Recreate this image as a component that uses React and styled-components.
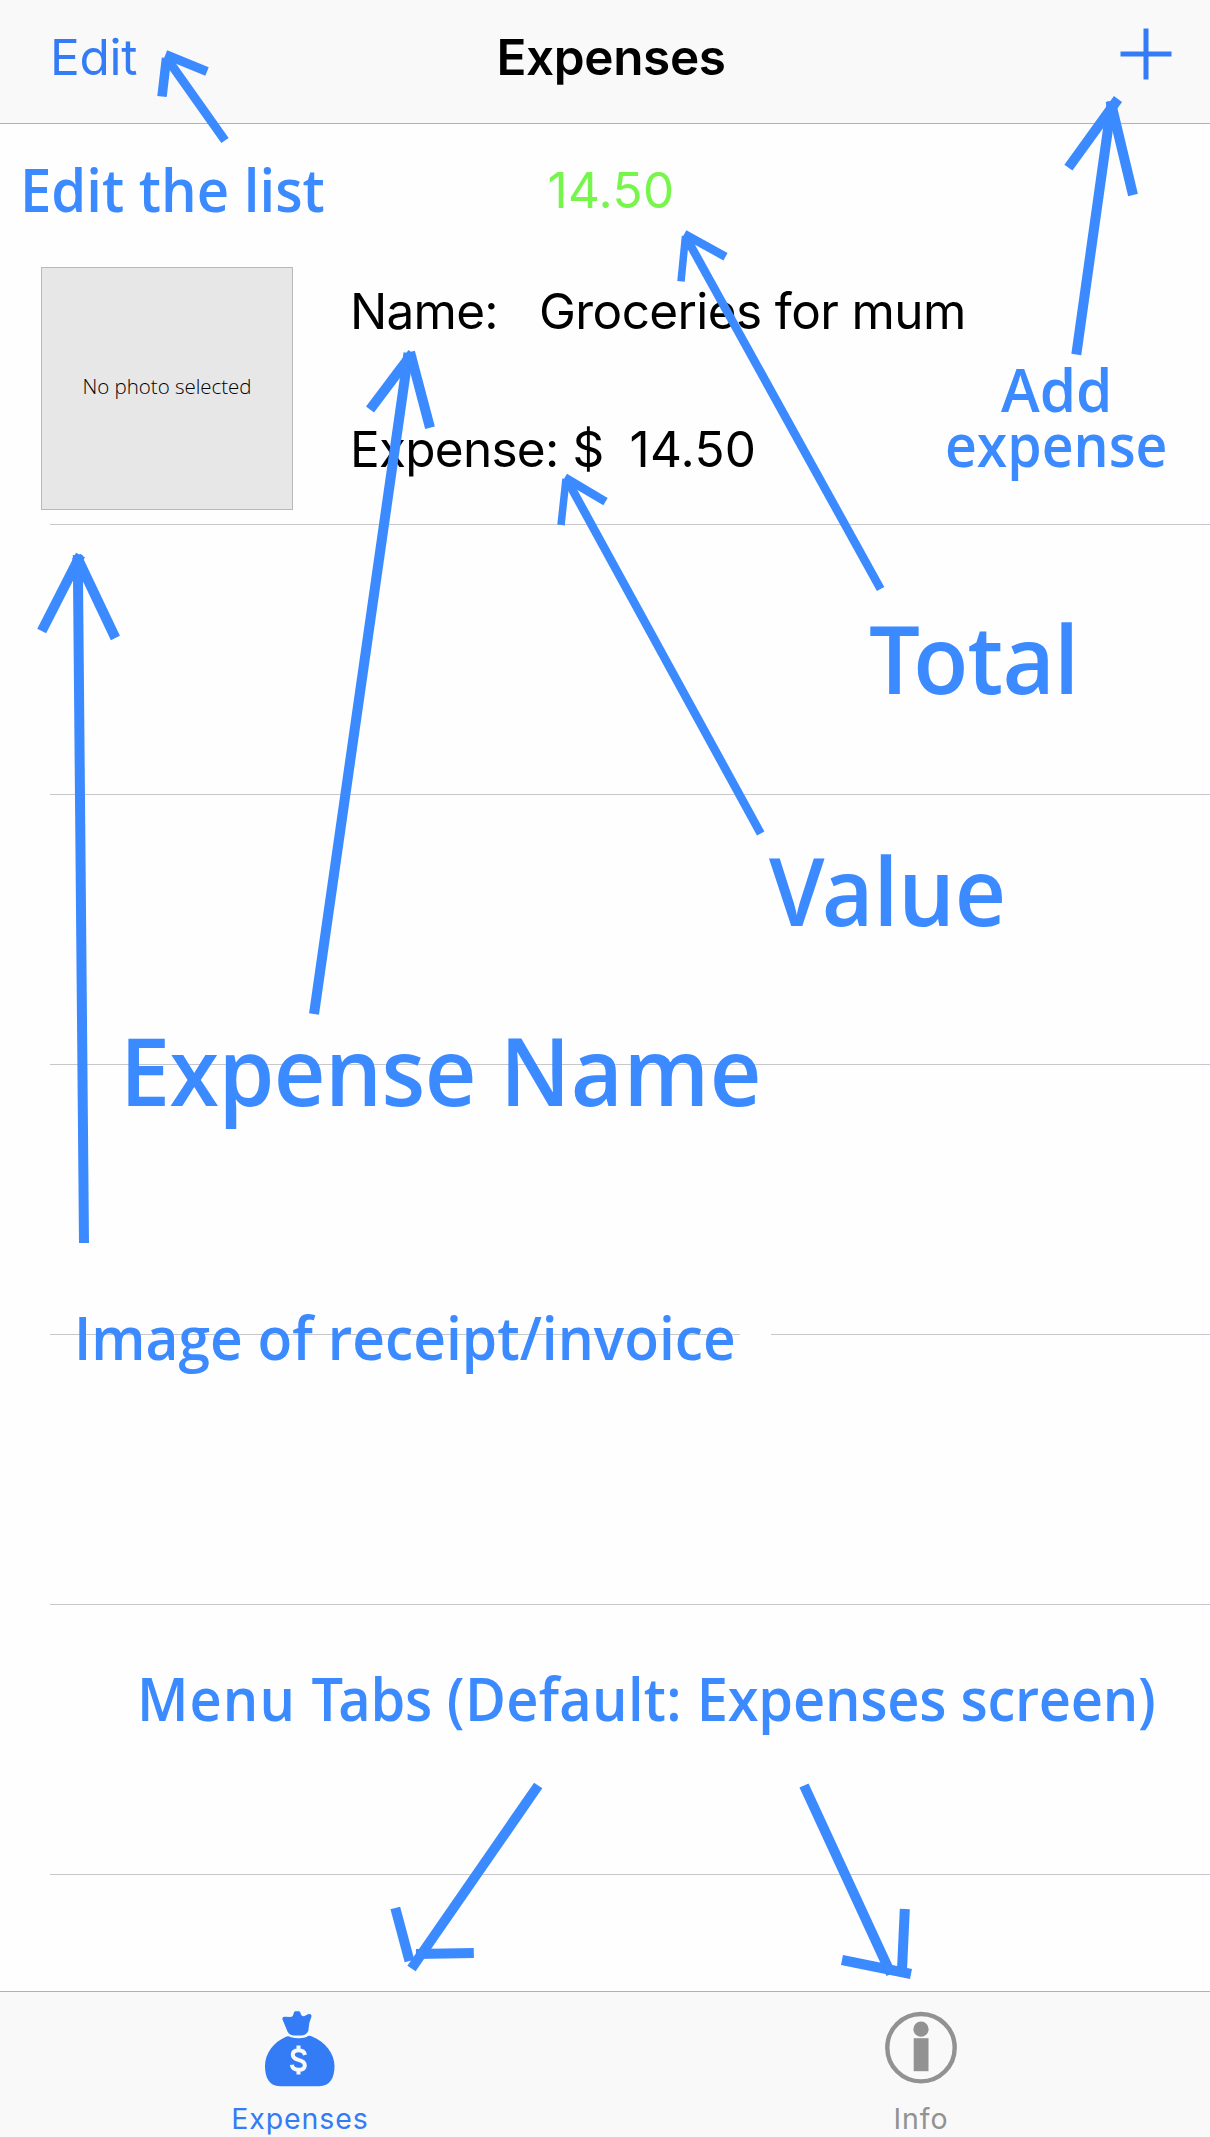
import React from "react";
import styled, { createGlobalStyle } from "styled-components";

const GlobalStyle = createGlobalStyle`
  body {
    margin: 0;
    background: #fff;
  }
`;

const BLUE = "#347cf6";
const NOTE = "#3b8aff";

const Screen = styled.div`
  position: relative;
  display: flex;
  flex-direction: column;
  width: 1210px;
  height: 2137px;
  overflow: hidden;
  background: #fefefe;
  color: #000;
  font-family: Inter, "Liberation Sans", sans-serif;
  font-size: 49.5px;
  line-height: 60px;
`;

const NavBar = styled.header`
  display: grid;
  grid-template-columns: 1fr auto 1fr;
  align-items: center;
  box-sizing: border-box;
  height: 124px;
  padding: 0 38px 9px 50px;
  background: #f9f9f9;
  border-bottom: 1px solid #b2b2b2;
`;

const EditButton = styled.button`
  justify-self: start;
  padding: 0;
  border: 0;
  background: none;
  color: ${BLUE};
  font: inherit;
  letter-spacing: -0.3px;
`;

const Title = styled.h1`
  margin: 0;
  font-size: inherit;
  font-weight: 600;
  letter-spacing: -0.38px;
`;

const AddButton = styled.button`
  justify-self: end;
  display: flex;
  margin-bottom: 7px;
  padding: 0;
  border: 0;
  background: none;
`;

const List = styled.main`
  flex: 1;
  min-height: 0;
  overflow: hidden;
`;

const Total = styled.div`
  display: flex;
  align-items: center;
  justify-content: center;
  height: 132px;
  padding-left: 12px;
  box-sizing: border-box;
  color: #76f54b;
  letter-spacing: 0.38px;
`;

const ExpenseRow = styled.article`
  display: flex;
  gap: 57px;
  height: 268px;
  padding: 11px 0 0 41px;
  box-sizing: border-box;
`;

const Photo = styled.div`
  display: flex;
  align-items: center;
  justify-content: center;
  box-sizing: border-box;
  width: 252px;
  height: 243px;
  padding-bottom: 5px;
  background: #e7e7e7;
  border: 1px solid #b9b9b9;
  font: 300 20.5px/28px "Open Sans", "Noto Sans", sans-serif;
  letter-spacing: -0.03px;
`;

const Details = styled.dl`
  display: flex;
  flex-direction: column;
  gap: 50px;
  margin: 0;
`;

const Field = styled.div`
  display: flex;
  align-items: center;
  height: 88px;
`;

const Label = styled.dt`
  width: ${(p) => p.$width}px;
  letter-spacing: -0.75px;
`;

const Currency = styled.dd`
  width: 57px;
  margin: 0;
`;

const Value = styled.dd`
  margin: 0;
  white-space: nowrap;
  letter-spacing: ${(p) => p.$spacing}px;
`;

const Separator = styled.div`
  height: 1px;
  margin-left: 50px;
  background: #c8c8ca;
`;

const EmptyRow = styled.div`
  height: 269px;
`;

const TabBar = styled.nav`
  display: flex;
  justify-content: center;
  gap: 221px;
  box-sizing: border-box;
  height: 146px;
  padding: 19px 0 0 11px;
  background: #f9f9f9;
  border-top: 1px solid #b2b2b2;
`;

const Tab = styled.a`
  display: flex;
  flex-direction: column;
  align-items: center;
  gap: 14px;
  width: 400px;
  color: ${(p) => (p.$active ? BLUE : "#929292")};
  font-size: 28.5px;
  line-height: 35px;
  letter-spacing: 0.88px;
`;

const Annotations = styled.div`
  position: absolute;
  inset: 0;
  pointer-events: none;
`;

const Arrows = styled.svg`
  position: absolute;
  inset: 0;
`;

const Eraser = styled.div`
  position: absolute;
  left: 740px;
  top: 1330px;
  width: 31px;
  height: 8px;
  background: #fefefe;
`;

const Note = styled.span`
  position: absolute;
  left: ${(p) => p.$x}px;
  top: ${(p) => p.$baseline + 1 - p.$size * 0.888}px;
  color: ${NOTE};
  font: 600 ${(p) => p.$size}px/1 "Open Sans", "Noto Sans", sans-serif;
  white-space: pre;
  transform: scaleX(${(p) => p.$stretch});
  transform-origin: 0 50%;
`;

const Tracked = styled.span`
  letter-spacing: ${(p) => p.$tracking}px;
`;

// Each note is a list of runs: [text, letter spacing]
const notes = [
  { runs: [["Edit the list", 0]], x: 19.5, baseline: 211, size: 58.8, stretch: 0.956 },
  { runs: [["Add", 0]], x: 1001, baseline: 411, size: 58.8, stretch: 0.995 },
  { runs: [["expense", 0]], x: 944.5, baseline: 466, size: 58.8, stretch: 0.94 },
  { runs: [["T", -7], ["otal", -0.8]], x: 869, baseline: 693, size: 94, stretch: 0.96 },
  { runs: [["V", -3], ["alue", 0]], x: 769, baseline: 925, size: 94, stretch: 0.948 },
  { runs: [["Expense", -0.6], [" Name", 0.6]], x: 119.5, baseline: 1105, size: 94, stretch: 0.956 },
  { runs: [["Image of receipt/invoice", 0]], x: 73.5, baseline: 1359, size: 58.8, stretch: 0.967 },
  {
    runs: [["Menu ", 1.1], ["T", -5], ["abs", -0.3], [" (Default: ", 0.35], ["Expenses screen)", -0.25]],
    x: 137,
    baseline: 1720,
    size: 58.8,
    stretch: 0.951,
  },
];

// Each arrow is a shaft and two barbs: [x1, y1, x2, y2, stroke width]
const strokes = [
  // edit
  [168, 60, 225, 140.5, 9],
  [165.5, 54.5, 207, 71.5, 9],
  [166.5, 58, 162, 96.5, 9.5],
  // add
  [1111.8, 102, 1076.3, 354.5, 10],
  [1118, 99, 1068.4, 167.6, 10],
  [1110.5, 101, 1133, 195, 10],
  // total
  [685.3, 236, 880.6, 589, 8.5],
  [684.3, 234, 725.5, 256.7, 8.5],
  [685.5, 236, 681, 281.3, 7.5],
  // value
  [566.5, 479, 760.7, 833.5, 8.5],
  [564.8, 477.5, 605.5, 501.7, 8.5],
  [566, 479, 561, 525, 7.5],
  // name
  [408.5, 353, 314, 1014, 10],
  [412.5, 353, 370, 409.5, 10],
  [410, 352, 430, 427.7, 10],
  // receipt
  [77.8, 555, 84, 1243, 10],
  [80.5, 555, 41.7, 631, 10],
  [76.5, 556, 115.4, 638, 10],
  // expenses tab
  [538.2, 1785.5, 411.5, 1968.5, 10],
  [395.3, 1908, 409.5, 1961, 10],
  [473.8, 1953, 416, 1954, 10],
  // info tab
  [804, 1785.5, 891, 1974, 10],
  [904.8, 1909, 902, 1970, 10],
  [842, 1960, 911, 1974, 10],
];

function PlusIcon() {
  return (
    <svg width="52" height="52" viewBox="0 0 52 52" stroke={BLUE} strokeWidth="5">
      <path d="M0.5 26H51.5M26 0.5V51.5" />
    </svg>
  );
}

function MoneyBagIcon() {
  return (
    <svg width="72" height="76" viewBox="0 0 72 76">
      <g fill={BLUE}>
        <path d="M18.3 8Q18.300 5.500 21 5.800L27 6Q29.300 5.300 29.800 2Q30 .3 31.500 .3H34.800Q36.300 .3 36.500 2Q37.300 5.500 40 5.300L44.500 3Q48.300 2.500 47.300 6L45.300 12L44.300 20Q41.800 24.600 37 24.600H30Q25.500 24.300 23.500 20.500Z" />
        <path d="M21.5 26Q24 24.600 27 26.200Q34.500 28.500 42 26.200Q45.500 23.800 48 25.500C61 31 70.500 42 70.500 55C70.500 67 66 75.200 55 75.200H16C5.500 75.200 1 67 1 55C1 42 10 31 21.500 26Z" />
      </g>
      <path
        d="M34.500 34.500V39M34.500 58.500V63.500M41 44Q40 39.200 34.500 39.200Q28.800 39.200 28.800 43.800Q28.800 47.400 34.500 48.900Q40.800 50.400 40.800 54.500Q40.800 58.800 34.500 58.800Q28.500 58.800 27.800 53.800"
        fill="none"
        stroke="#f9f9f9"
        strokeWidth="4"
      />
    </svg>
  );
}

function InfoIcon() {
  return (
    <svg width="76" height="76" viewBox="0 0 76 76" fill="#929292">
      <circle cx="38" cy="36.700" r="33.700" fill="none" stroke="#929292" strokeWidth="4.400" />
      <circle cx="38" cy="18.200" r="7.600" />
      <rect x="30.700" y="27.200" width="14.800" height="33" />
    </svg>
  );
}

export default function App() {
  return (
    <Screen>
      <GlobalStyle />
      <NavBar>
        <EditButton>Edit</EditButton>
        <Title>Expenses</Title>
        <AddButton aria-label="Add">
          <PlusIcon />
        </AddButton>
      </NavBar>

      <List>
        <Total>14.50</Total>
        <ExpenseRow>
          <Photo>No photo selected</Photo>
          <Details>
            <Field>
              <Label $width={189}>Name:</Label>
              <Value $spacing={-0.6}>Groceries for mum</Value>
            </Field>
            <Field>
              <Label $width={222.5}>Expense:</Label>
              <Currency>$</Currency>
              <Value $spacing={0.3}>14.50</Value>
            </Field>
          </Details>
        </ExpenseRow>
        <Separator />
        {[1, 2, 3, 4, 5].map((row) => (
          <React.Fragment key={row}>
            <EmptyRow />
            <Separator />
          </React.Fragment>
        ))}
      </List>

      <TabBar>
        <Tab $active>
          <MoneyBagIcon />
          Expenses
        </Tab>
        <Tab>
          <InfoIcon />
          Info
        </Tab>
      </TabBar>

      <Annotations>
        <Eraser />
        <Arrows width="1210" height="2137" stroke={NOTE}>
          {strokes.map(([x1, y1, x2, y2, width], i) => (
            <line key={i} x1={x1} y1={y1} x2={x2} y2={y2} strokeWidth={width} />
          ))}
        </Arrows>
        {notes.map((n) => (
          <Note key={n.baseline} $x={n.x} $baseline={n.baseline} $size={n.size} $stretch={n.stretch}>
            {n.runs.map(([text, tracking]) => (
              <Tracked key={text} $tracking={tracking}>
                {text}
              </Tracked>
            ))}
          </Note>
        ))}
      </Annotations>
    </Screen>
  );
}
